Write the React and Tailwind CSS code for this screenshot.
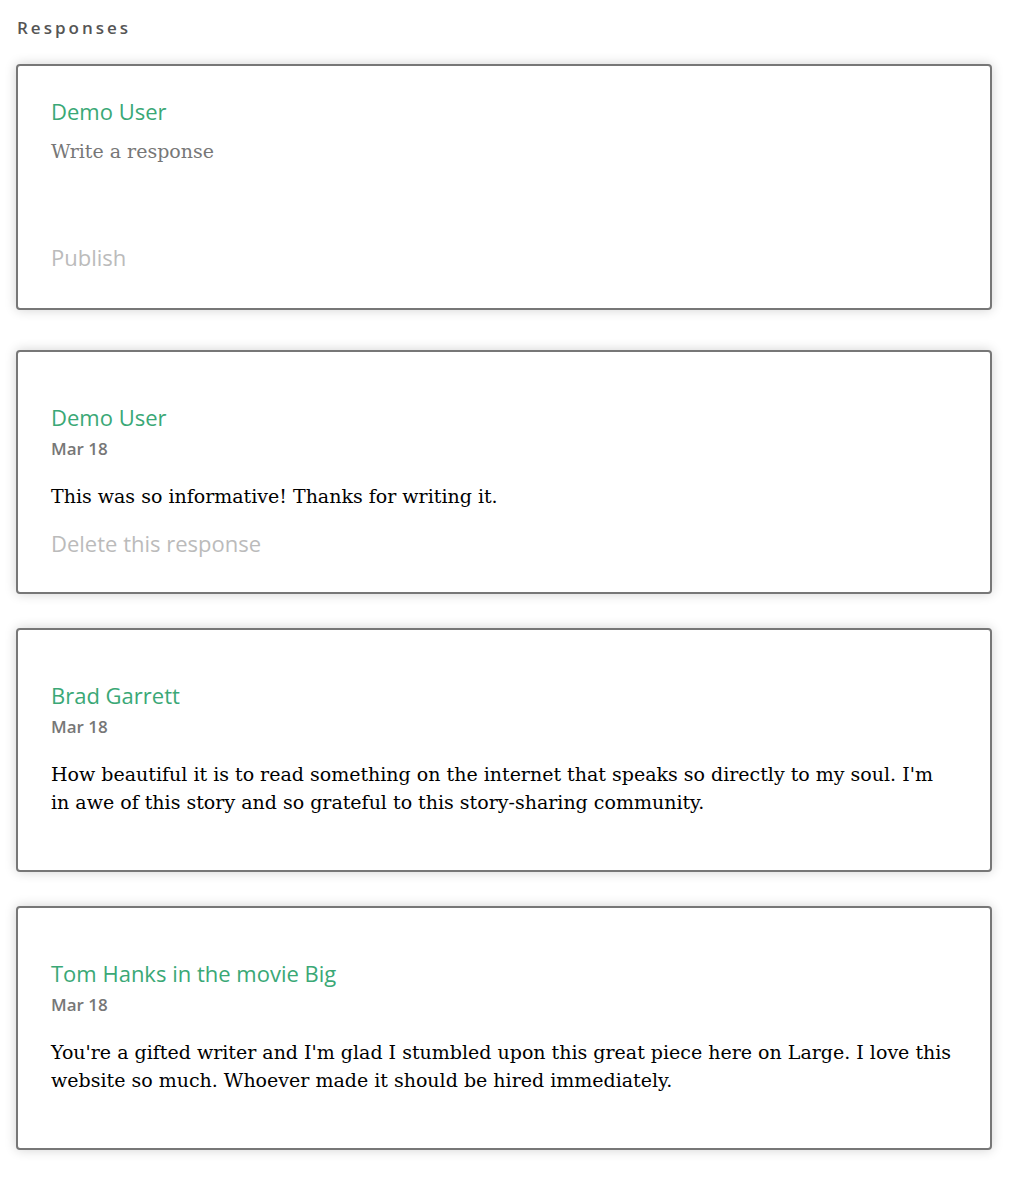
const responses = [
  { name: "Demo User", text: "This was so informative! Thanks for writing it.", del: true },
  {
    name: "Brad Garrett",
    text: "How beautiful it is to read something on the internet that speaks so directly to my soul. I'm in awe of this story and so grateful to this story-sharing community.",
  },
  {
    name: "Tom Hanks in the movie Big",
    text: "You're a gifted writer and I'm glad I stumbled upon this great piece here on Large. I love this website so much. Whoever made it should be hired immediately.",
  },
];

const cardCls =
  "ml-[16px] w-[976px] rounded-[4px] border-2 border-[#777] bg-white px-[33px] shadow-[0_0_12px_rgba(0,0,0,0.18)]";
const nameCls = "font-['Open_Sans','Noto_Sans',sans-serif] text-[22px] leading-[28px] text-[#3aa876]";
const serifCls = "font-['DejaVu_Serif','Liberation_Serif',serif] text-[19px] leading-[28px]";
const actionCls = "font-['Open_Sans','Noto_Sans',sans-serif] text-[22px] leading-[28px] text-[#bbb]";

export default function App() {
  return (
    <div className="min-h-[1190px] w-[1010px] bg-white">
      <div className="px-[17px] pt-[16px] pb-[24px]">
        <h2 className="font-['Open_Sans','Noto_Sans',sans-serif] text-[17px] leading-[24px] font-semibold tracking-[3px] text-[#555]">
          Responses
        </h2>
      </div>
      <div className="flex flex-col">
        <div className={cardCls + " h-[246px] pt-[31px]"}>
          <div className={nameCls}>Demo User</div>
          <div className={serifCls + " mt-[12px] text-[#777]"}>Write a response</div>
          <div className={actionCls + " mt-[78px]"}>Publish</div>
        </div>
        {responses.map((r, i) => (
          <div key={i} className={cardCls + " h-[244px] pt-[51px] " + (i === 0 ? "mt-[40px]" : "mt-[34px]")}>
            <div className={nameCls}>{r.name}</div>
            <div className="mt-[7px] font-['Open_Sans','Noto_Sans',sans-serif] text-[17px] leading-[22px] font-semibold text-[#777]">
              Mar 18
            </div>
            <p className={serifCls + " mt-[22px] pr-[4px] text-black"}>{r.text}</p>
            {r.del && <div className={actionCls + " mt-[19px]"}>Delete this response</div>}
          </div>
        ))}
      </div>
    </div>
  );
}
